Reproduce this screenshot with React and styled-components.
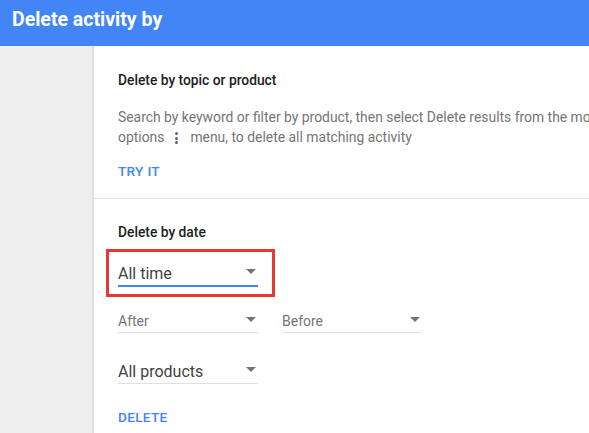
import React from 'react';
import styled, { createGlobalStyle } from "styled-components";

const GlobalStyle = createGlobalStyle`
    html, body {
        margin: 0;
        padding: 0;
        overflow: hidden;
        background: #ffffff;
    }
    body {
        font-family: Roboto, "Liberation Sans", Arial, sans-serif;
    }
`;

const Page = styled.div`
    width: 589px;
    height: 433px;
    display: flex;
    flex-direction: column;
    overflow: hidden;
`;

const Header = styled.header`
    height: 46px;
    flex-shrink: 0;
    background-color: #4285f4;
    color: #ffffff;
    font-size: 19.5px;
    font-weight: 700;
    padding: 9px 12px 0;
    box-sizing: border-box;
    line-height: 22px;
    white-space: nowrap;
`;

const Body = styled.div`
    flex: 1;
    display: flex;
`;

const Sidebar = styled.aside`
    width: 92px;
    flex-shrink: 0;
    background-color: #eeeeee;
    border-right: 2px solid #dedede;
`;

const Main = styled.main`
    flex: 1;
    min-width: 700px;
    background-color: #ffffff;
`;

const Section = styled.section`
    padding: ${props => props.top}px 24px ${props => props.bottom}px;
    border-bottom: ${props => props.divider ? "1px solid #e0e0e0" : "none"};
`;

const SectionTitle = styled.h2`
    margin: 0;
    font-size: 13.8px;
    font-weight: 500;
    line-height: 16px;
    color: #212121;
`;

const Desc = styled.p`
    margin: 19px 0 0;
    font-size: 13.9px;
    line-height: 20px;
    color: #757575;
    white-space: nowrap;
`;

const MoreIcon = styled.span`
    display: inline-block;
    position: relative;
    height: 20px;
    width: 3px;
    margin: 0 12px 0 11px;
    vertical-align: top;

    i {
        position: absolute;
        left: 0;
        width: 3px;
        height: 3px;
        border-radius: 50%;
        background-color: #616161;
    }
    i:nth-child(1) { top: 5px; }
    i:nth-child(2) { top: 9.5px; }
    i:nth-child(3) { top: 14px; }
`;

const TextButton = styled.button`
    display: block;
    margin: ${props => props.top}px 0 0;
    padding: 0;
    border: none;
    background: transparent;
    font-family: inherit;
    font-size: 13.6px;
    font-weight: 500;
    line-height: 16px;
    letter-spacing: 0.3px;
    color: #4285f4;
    text-transform: uppercase;
    cursor: pointer;
`;

const Highlight = styled.div`
    width: fit-content;
    margin: 9px 0 0 -12px;
    padding: 3px 14px 7px 9px;
    border: 3px solid #e53935;
`;

const Row = styled.div`
    display: flex;
    gap: 24px;
    margin-top: ${props => props.top}px;
`;

const Select = styled.div`
    width: 140px;
    height: ${props => props.h}px;
    box-sizing: border-box;
    display: flex;
    align-items: flex-end;
    justify-content: space-between;
    padding: 0 2px ${props => props.pb}px 0;
    border-bottom: ${props => props.active ? "2px solid #4285f4" : "1px solid #e0e0e0"};
    margin-top: ${props => props.top || 0}px;
    font-size: ${props => props.small ? 14 : 16}px;
    line-height: ${props => props.small ? 18 : 20}px;
    color: ${props => props.muted ? "#757575" : "#424242"};
    cursor: pointer;
`;

const Caret = styled.span`
    width: 0;
    height: 0;
    border-left: 5px solid transparent;
    border-right: 5px solid transparent;
    border-top: 5px solid #757575;
    align-self: center;
    margin-top: ${props => props.shift}px;
`;

const App = () => {
    return (
        <Page>
            <GlobalStyle />
            <Header>Delete activity by</Header>
            <Body>
                <Sidebar />
                <Main>
                    <Section top={26} bottom={19} divider>
                        <SectionTitle>Delete by topic or product</SectionTitle>
                        <Desc>
                            Search by keyword or filter by product, then select Delete results from the more
                            <br />
                            options<MoreIcon><i /><i /><i /></MoreIcon>menu, to delete all matching activity
                        </Desc>
                        <TextButton top={16}>Try it</TextButton>
                    </Section>
                    <Section top={25} bottom={0}>
                        <SectionTitle>Delete by date</SectionTitle>
                        <Highlight>
                            <Select h={32} pb={1} active>
                                <span>All time</span>
                                <Caret shift={4} />
                            </Select>
                        </Highlight>
                        <Row top={7}>
                            <Select h={29} pb={2} small muted>
                                <span>After</span>
                                <Caret shift={4} />
                            </Select>
                            <Select h={29} pb={2} small muted>
                                <span>Before</span>
                                <Caret shift={4} />
                            </Select>
                        </Row>
                        <Select h={31} pb={1} top={20}>
                            <span>All products</span>
                            <Caret shift={4} />
                        </Select>
                        <TextButton top={25}>Delete</TextButton>
                    </Section>
                </Main>
            </Body>
        </Page>
    );
};

export default App;
